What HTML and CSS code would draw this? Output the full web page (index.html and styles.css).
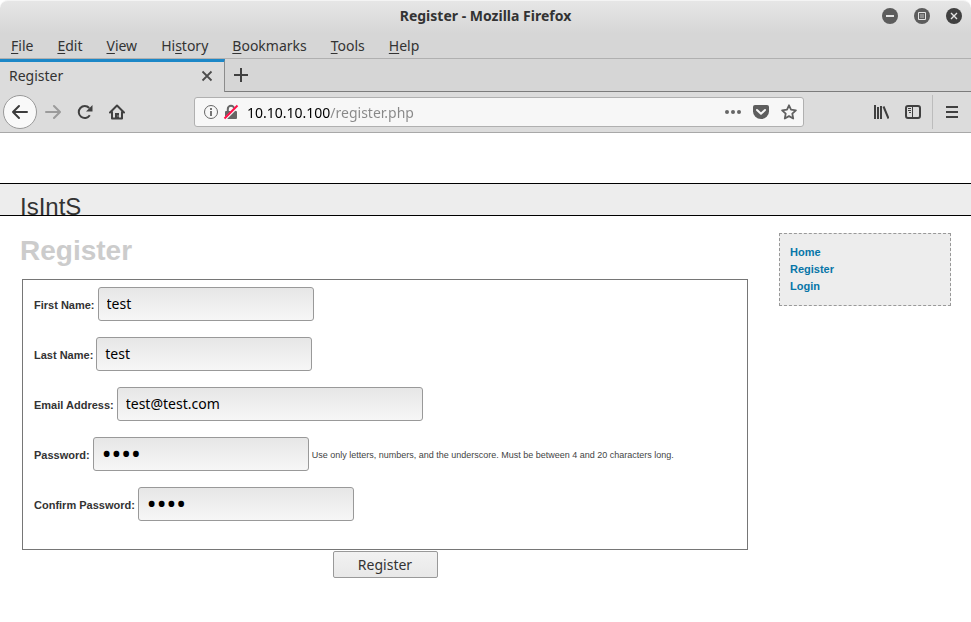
FILE: index.html
```html
<!DOCTYPE html>
<html lang="en">
<head>
<meta charset="utf-8">
<meta name="viewport" content="width=device-width, initial-scale=1">
<title>Register - Mozilla Firefox</title>
<link rel="stylesheet" href="styles.css">
</head>
<body>
<div class="window">
  <header class="chrome">
    <div class="titlebar">
      <div class="window-title">Register - Mozilla Firefox</div>
      <div class="window-controls">
        <button type="button" class="icon-button" aria-label="Minimize"><svg width="16" height="16" viewBox="0 0 16 16"><circle cx="8" cy="8" r="8" fill="#5c5c5c"/><path d="M4 8h8" stroke="#e4e4e4" stroke-width="2"/></svg></button>
        <button type="button" class="icon-button" aria-label="Maximize"><svg width="16" height="16" viewBox="0 0 16 16"><circle cx="8" cy="8" r="8" fill="#5c5c5c"/><path d="M4.500 4.500h7v7h-7z" fill="#5c5c5c" stroke="#e4e4e4"/><path d="M6 6h4v4H6z" fill="#8c8c8c"/></svg></button>
        <button type="button" class="icon-button" aria-label="Close"><svg width="16" height="16" viewBox="0 0 16 16"><circle cx="8" cy="8" r="8" fill="#404040"/><path d="M5 5l6 6M11 5l-6 6" stroke="#e4e4e4" stroke-width="1.4"/></svg></button>
      </div>
    </div>
    <nav class="menubar" aria-label="Menu bar">
      <button type="button"><u>F</u>ile</button>
      <button type="button"><u>E</u>dit</button>
      <button type="button"><u>V</u>iew</button>
      <button type="button">Hi<u>s</u>tory</button>
      <button type="button"><u>B</u>ookmarks</button>
      <button type="button"><u>T</u>ools</button>
      <button type="button"><u>H</u>elp</button>
    </nav>
    <div class="tabs">
      <div class="tab">
        <span>Register</span>
        <button type="button" class="icon-button" aria-label="Close tab"><svg width="16" height="16" viewBox="0 0 16 16"><path d="M3.500 3.500l9 9M12.500 3.500l-9 9" stroke="#4c4c4c" stroke-width="1.800"/></svg></button>
      </div>
      <div class="tab-rest">
        <button type="button" class="icon-button" aria-label="New tab"><svg width="16" height="16" viewBox="0 0 16 16"><path d="M8 1v14M1 8h14" stroke="#404040" stroke-width="2"/></svg></button>
      </div>
    </div>
    <div class="toolbar">
      <button type="button" class="icon-button back" aria-label="Back"><svg width="18" height="18" viewBox="0 0 18 18"><path d="M16 9H2M8 3L2 9l6 6" fill="none" stroke="#3c3c3c" stroke-width="2" stroke-linecap="round" stroke-linejoin="round"/></svg></button>
      <div class="nav-buttons">
        <button type="button" class="icon-button" aria-label="Forward"><svg width="16" height="16" viewBox="0 0 16 16"><path d="M1 8h13M9 2l6 6-6 6" fill="none" stroke="#9b9b9b" stroke-width="2" stroke-linecap="round" stroke-linejoin="round"/></svg></button>
        <button type="button" class="icon-button" aria-label="Reload"><svg width="16" height="16" viewBox="0 0 16 16"><path d="M12.800 11.300A6 6 0 1 1 12.200 4" fill="none" stroke="#404040" stroke-width="2"/><path d="M15.500 1v6.500H9z" fill="#404040"/></svg></button>
        <button type="button" class="icon-button" aria-label="Home"><svg width="16" height="16" viewBox="0 0 16 16"><path d="M1 8.500L8 1.500l7 7M3 7.500V14.500h10V7.500" fill="none" stroke="#404040" stroke-width="2" stroke-linecap="round" stroke-linejoin="round"/><path d="M6 15V9h4v6z" fill="#404040"/><path d="M8.500 11.500h1v1h-1z" fill="#ddd"/></svg></button>
      </div>
      <div class="urlbar">
        <svg width="16" height="16" viewBox="0 0 16 16" aria-hidden="true"><circle cx="8" cy="8" r="6.500" fill="none" stroke="#666"/><path d="M8 4v2M8 7v5" stroke="#666" stroke-width="1.800"/></svg>
        <svg width="16" height="16" viewBox="0 0 16 16" aria-hidden="true"><path d="M4.800 8V5a3.200 3.200 0 0 1 6.400 0v3" fill="none" stroke="#666" stroke-width="2"/><rect x="2" y="7" width="12" height="8" rx="1" fill="#666"/><path d="M2 15L15 2" stroke="#f7f7f7" stroke-width="3"/><path d="M1.500 14.500L14.500 1.500" stroke="#ff0f47" stroke-width="2"/></svg>
        <input class="url" type="text" aria-label="Address" value="10.10.10.100/register.php">
        <div class="url-actions">
          <button type="button" class="icon-button" aria-label="Page actions"><svg width="16" height="16" viewBox="0 0 16 16"><g fill="#666"><circle cx="2" cy="8" r="2"/><circle cx="8" cy="8" r="2"/><circle cx="14" cy="8" r="2"/></g></svg></button>
          <button type="button" class="icon-button" aria-label="Save to Pocket"><svg width="16" height="16" viewBox="0 0 16 16"><path d="M2 1h12a2 2 0 0 1 2 2v4.500a8 7.500 0 0 1-16 0V3a2 2 0 0 1 2-2z" fill="#5e5e5e"/><path d="M4 6l4 3.800L12 6" fill="none" stroke="#f7f7f7" stroke-width="2" stroke-linecap="round" stroke-linejoin="round"/></svg></button>
          <button type="button" class="icon-button" aria-label="Bookmark this page"><svg width="16" height="16" viewBox="0 0 16 16"><path d="M8 1.300l2 4.400 4.900.6-3.600 3.300.9 4.900L8 12.100l-4.200 2.400.9-4.900L1.100 6.300 6 5.700z" fill="none" stroke="#606060" stroke-width="1.800" stroke-linejoin="round"/></svg></button>
        </div>
      </div>
      <div class="tools">
        <button type="button" class="icon-button" aria-label="Library"><svg width="16" height="16" viewBox="0 0 16 16"><path d="M2 1v14M5 3v12M8 2v13" stroke="#404040" stroke-width="2"/><path d="M10.500 2.500l5 12" stroke="#404040" stroke-width="2"/></svg></button>
        <button type="button" class="icon-button" aria-label="Sidebars"><svg width="16" height="16" viewBox="0 0 16 16"><rect x="1" y="2" width="14" height="12" rx="2" fill="none" stroke="#404040" stroke-width="2"/><path d="M7.500 2v12" stroke="#404040"/><path d="M3 4.500h3M3 6.500h3M4 8.500h2" stroke="#404040"/></svg></button>
      </div>
      <div class="app-menu">
        <button type="button" class="icon-button" aria-label="Open menu"><svg width="16" height="16" viewBox="0 0 16 16"><path d="M2 3h12M2 8h12M2 13h12" stroke="#404040" stroke-width="2"/></svg></button>
      </div>
    </div>
  </header>

  <div class="page">
    <div class="banner"><span class="brand">IsIntS</span></div>
    <div class="columns">
      <main>
        <h1>Register</h1>
        <form>
          <fieldset>
            <div class="row"><label for="first">First Name:</label><input id="first" type="text" value="test"></div>
            <div class="row"><label for="last">Last Name:</label><input id="last" type="text" value="test"></div>
            <div class="row"><label for="email">Email Address:</label><input id="email" class="wide" type="text" value="test@test.com"></div>
            <div class="row"><label for="password">Password:</label><input id="password" type="password" value="test"><small>Use only letters, numbers, and the underscore. Must be between 4 and 20 characters long.</small></div>
            <div class="row"><label for="confirm">Confirm Password:</label><input id="confirm" type="password" value="test"></div>
          </fieldset>
          <button class="submit" type="button">Register</button>
        </form>
      </main>
      <nav class="sidebar" aria-label="Site">
        <a href="#home">Home</a>
        <a href="#register">Register</a>
        <a href="#login">Login</a>
      </nav>
    </div>
  </div>
</div>
</body>
</html>
```
FILE: styles.css
```css
* {
  box-sizing: border-box;
}

body {
  margin: 0;
  background: #fff;
  font: 11px/17px "Liberation Sans", Arial, sans-serif;
  color: #333;
}

svg {
  display: block;
  flex: none;
}

/* Browser chrome */
.chrome {
  background: linear-gradient(#e6e6e6, #d6d6d6 32px);
  border-top: 1px solid #f4f4f4;
  border-radius: 8px 8px 0 0;
  font: 14px/20px "Noto Sans", sans-serif;
  color: #333;
}

.icon-button {
  display: flex;
  padding: 0;
  border: 0;
  background: none;
}

.titlebar {
  display: grid;
  grid-template-columns: 1fr auto 1fr;
  align-items: center;
  height: 30px;
  padding: 0 9px;
}

.window-title {
  grid-column: 2;
  font: bold 14px/20px "Noto Sans", sans-serif;
}

.window-controls {
  display: flex;
  justify-content: flex-end;
  gap: 16px;
}

.menubar {
  display: flex;
  gap: 24px;
  height: 28px;
  padding: 5px 11px 2px;
  border-bottom: 1px solid #b0b0b0;
}

.menubar button {
  padding: 0;
  border: 0;
  background: none;
  font: inherit;
  color: inherit;
}

.menubar u {
  text-underline-offset: 2px;
}

.tabs {
  display: flex;
  height: 33px;
}

.tab {
  display: flex;
  align-items: center;
  justify-content: space-between;
  width: 225px;
  padding: 0 9px 2px;
  border-top: 3px solid #1c87c7;
  border-right: 1px solid #8c8c8c;
  background: #dcdcdc;
}

.tab-rest {
  display: flex;
  flex: 1;
  align-items: center;
  padding: 0 8px;
  border-bottom: 1px solid #7c7c7c;
}

.toolbar {
  display: flex;
  align-items: center;
  height: 41px;
  padding-left: 3px;
  border-bottom: 1px solid #a8a8a8;
  background: #dcdcdc;
}

.back {
  align-items: center;
  justify-content: center;
  width: 34px;
  height: 34px;
  border: 1px solid #999;
  border-radius: 50%;
  background: #f9f9f9;
}

.nav-buttons {
  display: flex;
  gap: 16px;
  padding: 0 69px 0 8px;
}

.urlbar {
  display: flex;
  flex: 1;
  align-items: center;
  gap: 4px;
  min-width: 0;
  height: 30px;
  padding: 0 6px 0 8px;
  border: 1px solid #b0b0b0;
  border-radius: 3px;
  background: #f7f7f7;
}

.url {
  flex: 1;
  min-width: 0;
  margin-left: 4px;
  padding: 2px 0 0;
  border: 0;
  outline: 0;
  background: linear-gradient(90deg, #000 83px, #888 83px);
  background-clip: text;
  font: 14px/20px "Noto Sans", sans-serif;
  color: transparent;
}

.url-actions {
  display: flex;
  gap: 12px;
}

.tools {
  display: flex;
  gap: 16px;
  padding: 0 11px 0 69px;
}

.app-menu {
  display: flex;
  align-items: center;
  height: 34px;
  padding: 0 11px;
  border-left: 1px solid #bcbcbc;
}

/* Site */
.page {
  padding-top: 50px;
}

.banner {
  height: 33px;
  padding: 9px 20px 0;
  overflow: hidden;
  border: solid #000;
  border-width: 1px 0;
  background: #ededed;
}

.brand {
  display: block;
  font-size: 24px;
  line-height: 28px;
}

.columns {
  display: flex;
  align-items: flex-start;
  gap: 29px;
  padding: 17px 20px 20px;
}

main {
  flex: 1;
  min-width: 0;
}

h1 {
  margin: 0 0 10px;
  font-size: 28px;
  line-height: 36px;
  color: #ccc;
}

form {
  display: flex;
  flex-direction: column;
  align-items: center;
  padding: 0 2px;
}

fieldset {
  display: flex;
  flex-direction: column;
  gap: 16px;
  width: 100%;
  min-width: 0;
  margin: 0 0 1px;
  padding: 7px 11px 28px;
  border: 1px solid #767676;
}

.row {
  display: flex;
  align-items: center;
  gap: 3px;
}

label,
small {
  padding-top: 2px;
}

label {
  font-weight: bold;
}

small {
  font-size: 9px;
  color: #444;
}

.row input {
  width: 216px;
  height: 34px;
  padding: 0 8px 2px;
  border: 1px solid #999;
  border-radius: 3px;
  background: linear-gradient(#e6e6e6, #f6f6f6);
  font: 14px/20px "Noto Sans", sans-serif;
  color: #000;
}

.row input[type="password"] {
  font-size: 26px;
}

.row .wide {
  width: 306px;
}

.submit {
  width: 105px;
  height: 27px;
  padding: 0;
  border: 1px solid #999;
  border-radius: 2px;
  background: linear-gradient(#f2f2f2, #e8e8e8);
  font: 14px/20px "Noto Sans", sans-serif;
  color: #333;
}

.sidebar {
  display: flex;
  flex-direction: column;
  width: 172px;
  padding: 10px;
  border: 1px dashed #999;
  background: #ededed;
  font-weight: bold;
}

.sidebar a {
  color: #0776a8;
  text-decoration: none;
}
```
